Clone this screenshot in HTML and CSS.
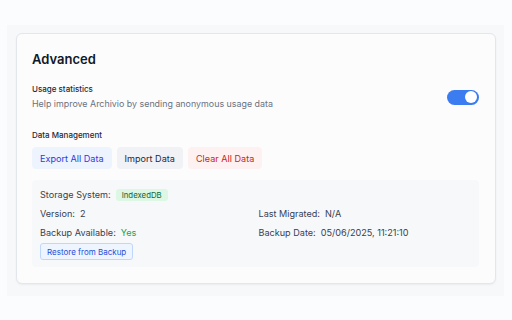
FILE: index.html
```html
<!DOCTYPE html>
<html lang="en">
<head>
    <meta charset="UTF-8">
    <meta name="viewport" content="width=device-width, initial-scale=1.0">
    <title>Settings - Advanced</title>
    <link rel="stylesheet" href="styles.css">
</head>
<body>

<div class="settings-wrap">
    <div class="settings-card">
        <h2>Advanced</h2>

        <div class="setting-row">
            <div class="setting-text">
                <div class="setting-label">Usage statistics</div>
                <div class="setting-desc">Help improve Archivio by sending anonymous usage data</div>
            </div>
            <label class="toggle">
                <input type="checkbox" checked>
                <span class="slider"></span>
            </label>
        </div>

        <div class="section-label">Data Management</div>
        <div class="btn-row">
            <button class="btn btn-blue">Export All Data</button>
            <button class="btn btn-gray">Import Data</button>
            <button class="btn btn-red">Clear All Data</button>
        </div>

        <div class="storage-box">
            <div class="info-line">
                <span class="info-key">Storage System:</span>
                <span class="badge">IndexedDB</span>
            </div>
            <div class="info-grid">
                <div class="info-line"><span class="info-key">Version:</span> <span>2</span></div>
                <div class="info-line"><span class="info-key">Last Migrated:</span> <span>N/A</span></div>
                <div class="info-line"><span class="info-key">Backup Available:</span> <span class="yes">Yes</span></div>
                <div class="info-line"><span class="info-key">Backup Date:</span> <span>05/06/2025, 11:21:10</span></div>
            </div>
            <button class="restore-btn">Restore from Backup</button>
        </div>
    </div>
</div>

</body>
</html>
```

FILE: styles.css
```css
body {
    font-family: Inter, "Noto Sans", sans-serif;
    background-color: #fbfcfd;
    margin: 0;
    padding: 25px 8px 25px 7px;
    color: #111827;
}
.settings-wrap {
    background-color: #f7f8fa;
    padding: 8px 8px 12px 9px;
}
.settings-card {
    background-color: #fcfcfd;
    border: 1px solid #e3e6ea;
    border-radius: 6px;
    box-shadow: 0 1px 2px rgba(0, 0, 0, 0.05);
    padding: 15px 16px 16px 15px;
}
h2 {
    font-size: 13px;
    font-weight: 600;
    margin: 0 0 14px 0;
    line-height: 20px;
}
.setting-row {
    display: flex;
    justify-content: space-between;
    align-items: center;
    margin-bottom: 17px;
}
.setting-label {
    font-size: 8px;
    font-weight: 500;
    line-height: 13px;
    color: #1f2937;
}
.setting-desc {
    font-size: 8.9px;
    line-height: 16px;
    color: #6b7280;
}
.toggle {
    position: relative;
    width: 32px;
    height: 15px;
    margin-bottom: 1px;
}
.toggle input {
    display: none;
}
.slider {
    position: absolute;
    inset: 0;
    background-color: #3b7cf0;
    border-radius: 8px;
}
.slider::after {
    content: "";
    position: absolute;
    right: 2px;
    top: 1.5px;
    width: 12px;
    height: 12px;
    border-radius: 50%;
    background-color: white;
}
.section-label {
    font-size: 8px;
    font-weight: 500;
    line-height: 13px;
    color: #1f2937;
    margin-bottom: 5px;
}
.btn-row {
    display: flex;
    gap: 5px;
    margin-bottom: 11px;
}
.btn {
    font-family: inherit;
    font-size: 9.1px;
    height: 22px;
    padding: 0 8px;
    border: none;
    border-radius: 4px;
    cursor: pointer;
}
.btn-blue {
    background-color: #eef4fd;
    color: #1d3fe0;
}
.btn-gray {
    background-color: #f1f2f5;
    color: #1f2937;
}
.btn-red {
    background-color: #fdf1f2;
    color: #d01c1c;
}
.storage-box {
    background-color: #f7f8fa;
    border-radius: 4px;
    padding: 5px 8px 7px 8px;
    font-size: 9.1px;
    color: #374151;
}
.info-line {
    display: flex;
    align-items: center;
    gap: 5px;
    height: 19px;
}
.info-grid {
    display: grid;
    grid-template-columns: 1fr 1fr;
    column-gap: 6px;
}
.badge {
    background-color: #dcf7e3;
    color: #166534;
    font-size: 7.8px;
    padding: 0 6px;
    line-height: 12px;
    border-radius: 3px;
}
.yes {
    color: #16a34a;
}
.restore-btn {
    font-family: inherit;
    font-size: 8px;
    color: #1d4ed8;
    background-color: #eff5ff;
    border: 1px solid #bfd7fb;
    border-radius: 3px;
    height: 17px;
    padding: 0 6px;
    margin-top: 1px;
    cursor: pointer;
}
```
